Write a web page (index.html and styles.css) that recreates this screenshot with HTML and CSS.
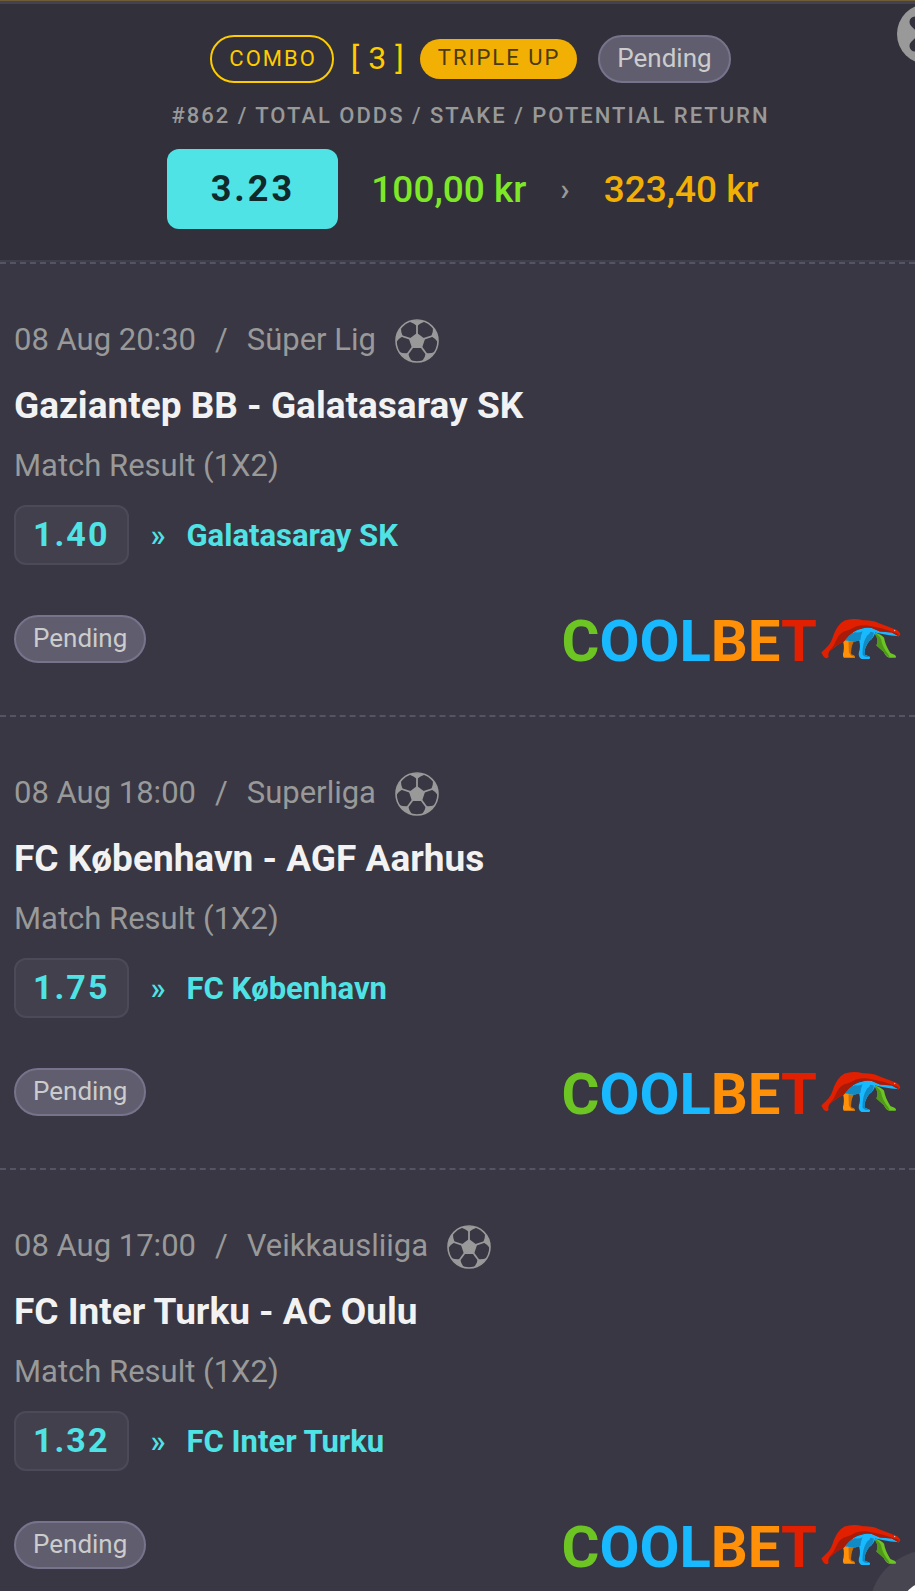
FILE: index.html
```
<!DOCTYPE html>
<html lang="en">
<head>
    <meta charset="UTF-8">
    <meta name="viewport" content="width=device-width, initial-scale=1.0">
    <title>Bet slip #862</title>
    <link rel="stylesheet" href="styles.css">
</head>
<body>
    <!-- Shared icons -->
    <svg class="sprite" aria-hidden="true">
        <symbol id="icon-ball" viewBox="0 0 44 44">
            <circle cx="22" cy="22" r="21" fill="none" stroke="currentColor" stroke-width="1.600"/>
            <path d="M22 14l8 6-3 9H17l-3-9z" fill="currentColor"/>
            <g id="ball-seam">
                <path d="M22 15V5" stroke="currentColor" stroke-width="1.800"/>
                <path d="M14 2.500Q22 0 30 2.500Q25 4 22 7Q19 4 14 2.500z" fill="currentColor"/>
            </g>
            <use href="#ball-seam" transform="rotate(72 22 22)"/>
            <use href="#ball-seam" transform="rotate(144 22 22)"/>
            <use href="#ball-seam" transform="rotate(216 22 22)"/>
            <use href="#ball-seam" transform="rotate(288 22 22)"/>
        </symbol>
        <symbol id="icon-bear" viewBox="59 56 241 123">
            <path d="M124 120L152 124L149 164Q160 165 162 174H128Q123 168 127 155Q130 135 124 120z" fill="#ff9008"/>
            <path d="M142 124L158 124L149 146L150 165Q160 165 162 172L150 168L143 158z" fill="#c96d05"/>
            <path d="M217 97Q240 102 249 114Q252 135 268 160L282 166Q287 171 284 174H264Q255 172 248 157L226 137Q236 118 217 97z" fill="#6dc524"/>
            <path d="M217 98Q232 103 240 118Q243 140 262 164L266 173Q256 172 248 157L226 137Q236 118 217 98z" fill="#4f981a"/>
            <path d="M131 120Q148 92 190 84L210 80L250 92L276 97L295 109Q270 108 248 103L222 98Q219 115 204 124Q190 142 190 164L206 171Q209 177 203 178H181Q171 172 173 158Q179 142 174 121Q150 131 131 120z" fill="#18b9ff"/>
            <path d="M133 119Q146 99 162 97Q174 99 184 94Q178 109 178 120Q153 130 133 119z" fill="#128ac3"/>
            <path d="M218 98Q218 115 204 124Q189 142 190 164L204 171Q192 174 184 165Q183 130 198 107Q206 103 208 96z" fill="#128ac3"/>
            <path d="M60 158Q73 146 82 136Q91 126 98 102Q110 73 130 62Q155 53 186 61Q215 60 232 69L280 87Q297 93 298 105L293 109L272 98L236 95L212 84Q180 80 159 94Q140 107 128 125Q108 134 86 153Q79 160 82 171Q79 178 71 174Q65 170 60 158z" fill="#e02000"/>
            <path d="M84 154Q99 138 106 119Q116 96 138 92Q151 88 164 80Q181 75 195 76L222 81Q248 85 269 94L292 102L292 109L272 98L236 95L212 84Q180 80 159 94Q140 107 128 125Q108 134 84 154z" fill="#a91b09"/>
            <circle cx="281" cy="92" r="2" fill="#ffb0a0"/>
        </symbol>
    </svg>

    <button class="close" type="button" aria-label="Close">
        <svg viewBox="0 0 60 60" aria-hidden="true"><path d="M18 18l24 24M42 18L18 42"/></svg>
    </button>

    <main class="slip">
        <header class="slip-header">
            <div class="tags">
                <span class="tag tag-combo">COMBO</span>
                <span class="count">[3]</span>
                <span class="tag tag-triple">TRIPLE UP</span>
                <span class="status">Pending</span>
            </div>
            <div class="caption">#862 / TOTAL ODDS / STAKE / POTENTIAL RETURN</div>
            <div class="totals">
                <span class="total-odds">3.23</span>
                <span class="stake">100,00 kr</span>
                <span class="arrow">›</span>
                <span class="return">323,40 kr</span>
            </div>
        </header>

        <section class="bet">
            <div class="meta">
                <span>08 Aug 20:30</span><span>/</span><span>Süper Lig</span>
                <svg class="ball" aria-hidden="true"><use href="#icon-ball"/></svg>
            </div>
            <h2>Gaziantep BB - Galatasaray SK</h2>
            <p class="market">Match Result (1X2)</p>
            <div class="pick">
                <span class="odds">1.40</span>
                <span class="quote">»</span>
                <strong>Galatasaray SK</strong>
            </div>
            <div class="bet-footer">
                <span class="status">Pending</span>
                <div class="brand">
                    <span class="brand-name"><span class="green">C</span><span class="blue">OOL</span><span class="orange">BE</span><span class="red">T</span></span>
                    <svg class="bear" aria-hidden="true"><use href="#icon-bear"/></svg>
                </div>
            </div>
        </section>

        <section class="bet">
            <div class="meta">
                <span>08 Aug 18:00</span><span>/</span><span>Superliga</span>
                <svg class="ball" aria-hidden="true"><use href="#icon-ball"/></svg>
            </div>
            <h2>FC København - AGF Aarhus</h2>
            <p class="market">Match Result (1X2)</p>
            <div class="pick">
                <span class="odds">1.75</span>
                <span class="quote">»</span>
                <strong>FC København</strong>
            </div>
            <div class="bet-footer">
                <span class="status">Pending</span>
                <div class="brand">
                    <span class="brand-name"><span class="green">C</span><span class="blue">OOL</span><span class="orange">BE</span><span class="red">T</span></span>
                    <svg class="bear" aria-hidden="true"><use href="#icon-bear"/></svg>
                </div>
            </div>
        </section>

        <section class="bet">
            <div class="meta">
                <span>08 Aug 17:00</span><span>/</span><span>Veikkausliiga</span>
                <svg class="ball" aria-hidden="true"><use href="#icon-ball"/></svg>
            </div>
            <h2>FC Inter Turku - AC Oulu</h2>
            <p class="market">Match Result (1X2)</p>
            <div class="pick">
                <span class="odds">1.32</span>
                <span class="quote">»</span>
                <strong>FC Inter Turku</strong>
            </div>
            <div class="bet-footer">
                <span class="status">Pending</span>
                <div class="brand">
                    <span class="brand-name"><span class="green">C</span><span class="blue">OOL</span><span class="orange">BE</span><span class="red">T</span></span>
                    <svg class="bear" aria-hidden="true"><use href="#icon-bear"/></svg>
                </div>
            </div>
        </section>
    </main>

    <button class="chat" type="button" aria-label="Open chat"><span></span></button>
</body>
</html>
```
FILE: styles.css
```
* {
    box-sizing: border-box;
}

body {
    margin: 0;
    background-color: #383743;
    color: #999;
    font-family: Roboto, "Liberation Sans", sans-serif;
    font-size: 31px;
    overflow-x: hidden;
}

.sprite {
    position: absolute;
    width: 0;
    height: 0;
}

.slip {
    border-top: 1px solid #6f5d38;
}

.slip-header {
    display: flex;
    flex-direction: column;
    align-items: center;
    padding: 31px 0 31px 26px;
    border-top: 3px solid #434350;
    border-bottom: 2px solid #3f3e4b;
    background-color: #32313b;
}

.tags {
    display: flex;
    align-items: center;
}

.tag {
    font-size: 22px;
    letter-spacing: 2px;
}

.tag-combo {
    height: 48px;
    padding: 0 15px 0 17px;
    border: 2px solid #fc0;
    border-radius: 24px;
    line-height: 44px;
    color: #fc0;
}

.count {
    margin: 0 7px 0 17px;
    padding-bottom: 2px;
    font-size: 32px;
    line-height: 44px;
    letter-spacing: 9px;
    color: #fc0;
}

.tag-triple {
    height: 40px;
    padding: 0 17px 0 18px;
    border-radius: 20px;
    background-color: #f2b004;
    line-height: 38px;
    color: #4b3a10;
}

.status {
    height: 48px;
    padding: 0 17px;
    border: 2px solid #77738c;
    border-radius: 24px;
    background-color: #605e6e;
    font-size: 26px;
    line-height: 42px;
    color: #ccc;
}

.tags .status {
    margin-left: 21px;
}

.caption {
    margin-top: 19px;
    font-size: 22px;
    font-weight: 500;
    line-height: 28px;
    letter-spacing: 2px;
}

.totals {
    display: flex;
    align-items: center;
    margin-top: 19px;
    padding-right: 15px;
    font-size: 37px;
    font-weight: 500;
}

.total-odds {
    width: 171px;
    height: 80px;
    margin-right: 33px;
    border-radius: 12px;
    background-color: #50e3e6;
    font-size: 36px;
    line-height: 80px;
    letter-spacing: 3px;
    text-align: center;
    font-weight: 700;
    color: #10292b;
}

.stake {
    color: #7ee828;
}

.arrow {
    margin: 0 34px;
    font-size: 31px;
}

.return {
    color: #f2b004;
}

.bet {
    padding: 54px 14px 52px;
    border-top: 2px dashed #555464;
}

.meta {
    display: flex;
    align-items: center;
    gap: 19px;
    height: 46px;
}

.meta span {
    padding-bottom: 4px;
}

.ball {
    width: 44px;
    height: 44px;
}

h2 {
    margin: 20px 0 18px;
    font-size: 37px;
    font-weight: 700;
    line-height: 44px;
    color: #f2f2f2;
}

.market {
    margin: 0 0 19px;
    line-height: 40px;
}

.pick {
    display: flex;
    align-items: center;
    color: #50e3e6;
}

.odds {
    height: 60px;
    padding: 0 18px 0 17px;
    border: 2px solid #4c4a59;
    border-radius: 12px;
    background-color: #41404c;
    font-size: 34px;
    font-weight: 700;
    line-height: 54px;
    letter-spacing: 2px;
}

.quote {
    margin: 0 21px;
    font-weight: 500;
}

.bet-footer {
    display: flex;
    align-items: center;
    justify-content: space-between;
    margin-top: 50px;
}

.brand {
    display: flex;
    align-items: center;
    gap: 4px;
    height: 48px;
}

.brand-name {
    padding-top: 4px;
    font-size: 58px;
    font-weight: 700;
    line-height: 48px;
}

.bear {
    width: 80px;
    height: 42px;
}

.green {
    color: #6dc524;
}

.blue {
    color: #18b9ff;
}

.orange {
    color: #ff9008;
}

.red {
    color: #e02000;
}

/* Floating buttons, partly off the right edge */
.close {
    position: fixed;
    top: 4px;
    right: -42px;
    width: 60px;
    height: 60px;
    padding: 0;
    border: 0;
    border-radius: 50%;
    background-color: #999;
}

.close svg {
    display: block;
    width: 60px;
    height: 60px;
    fill: none;
    stroke: #32313b;
    stroke-width: 11;
    stroke-linecap: round;
}

.chat {
    position: fixed;
    right: -76px;
    bottom: -81px;
    display: flex;
    align-items: center;
    justify-content: center;
    width: 122px;
    height: 122px;
    padding: 0;
    border: 0;
    border-radius: 50%;
    background-color: #464550;
}

.chat span {
    width: 60px;
    height: 60px;
    border-radius: 50%;
    background-color: #fff;
}

/* The floating button sits behind the last logo */
.chat {
    z-index: 0;
}

.brand {
    position: relative;
    z-index: 1;
}
```
